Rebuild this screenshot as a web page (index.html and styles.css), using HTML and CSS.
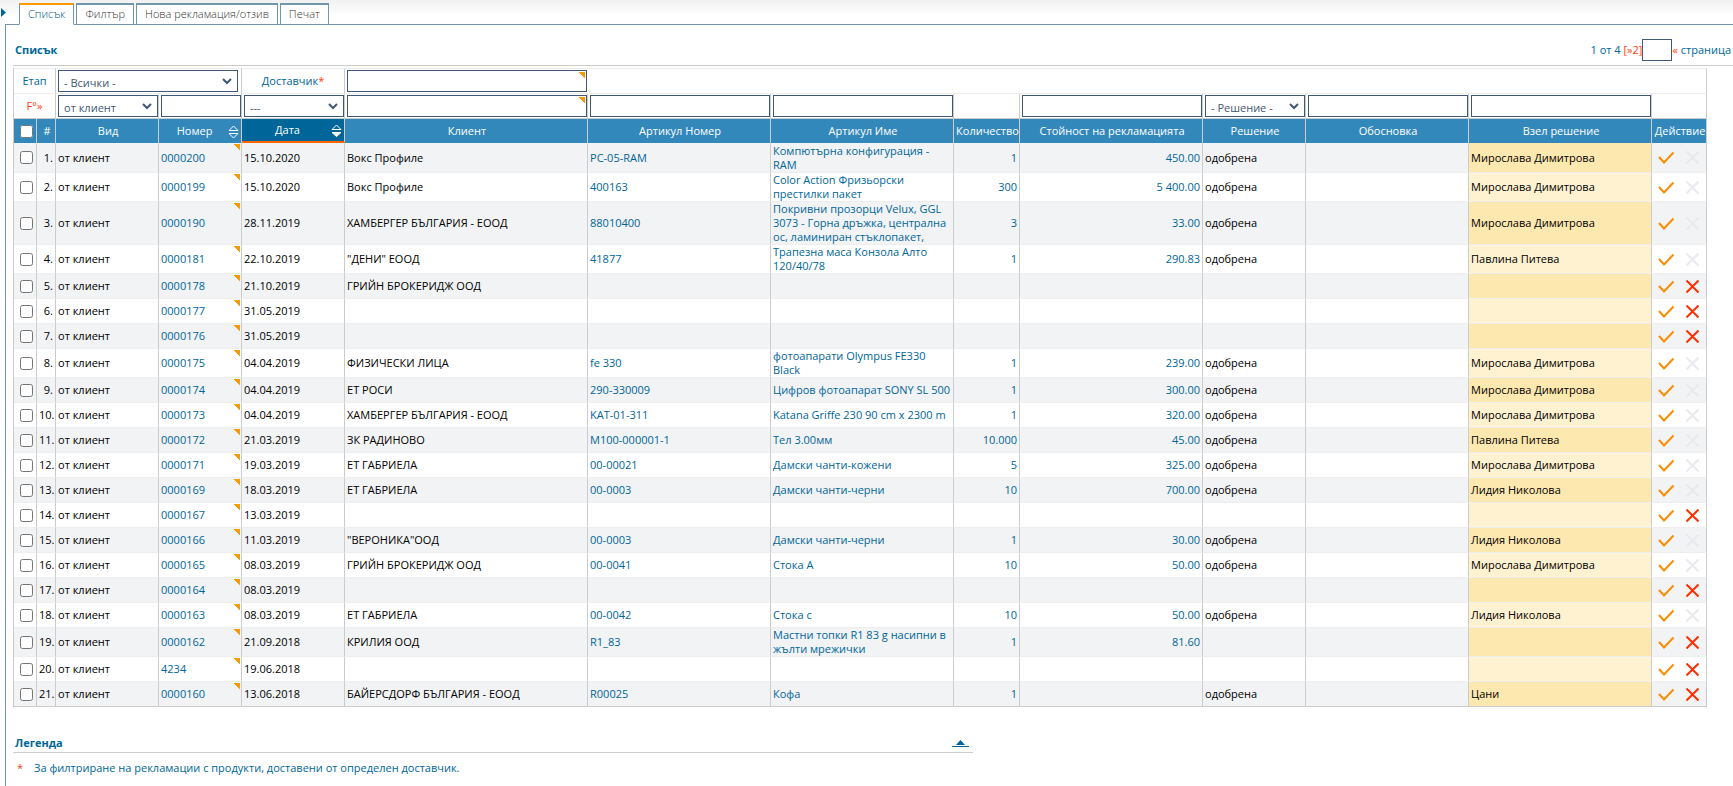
FILE: index.html
```html
<!DOCTYPE html>
<html lang="bg">
<head>
<meta charset="utf-8">
<title>Рекламации</title>
<link rel="stylesheet" href="styles.css">
</head>
<body>
<header class="top">
  <button class="side-toggle" type="button" aria-label="Меню"><svg width="6" height="9" viewBox="0 0 6 9"><path d="M1 0v9l5-4.500z" fill="#069"/></svg></button>
  <nav class="tabs">
    <a class="tab active" href="#">Списък</a>
    <a class="tab" href="#">Филтър</a>
    <a class="tab" href="#">Нова рекламация/отзив</a>
    <a class="tab" href="#">Печат</a>
  </nav>
</header>
<main class="panel">
  <div class="heading">
    <h1 class="title">Списък</h1>
    <div class="pager"><span>1 от 4&nbsp;</span><a class="hot" href="#">[»2]</a><input class="field page" type="text" aria-label="страница"><a class="hot" href="#">«</a><span>&nbsp;страница</span></div>
  </div>
  <div class="table-wrap">
  <table class="grid">
    <colgroup><col class="w-check"><col class="w-num"><col class="w-m"><col class="w-s"><col class="w-m"><col class="w-xl"><col class="w-l"><col class="w-l"><col class="w-qty"><col class="w-l"><col class="w-m"><col class="w-reason"><col class="w-l"><col class="w-act"></colgroup>
    <thead>
      <tr class="filters first">
        <td colspan="2" class="label"><label for="stage">Етап</label></td>
        <td colspan="2"><select id="stage" class="field pick stage"><option>- Всички -</option></select></td>
        <td class="label"><label for="supplier">Доставчик<span class="hot">*</span></label></td>
        <td colspan="9"><input id="supplier" class="field corner supplier" type="text"></td>
      </tr>
      <tr class="filters second">
        <td colspan="2" class="label"><a class="hot" href="#">F°»</a></td>
        <td><select class="field pick" aria-label="Вид"><option>от клиент</option></select></td>
        <td><input class="field" type="text" aria-label="Номер"></td>
        <td><select class="field pick" aria-label="Дата"><option>---</option></select></td>
        <td><input class="field corner" type="text" aria-label="Клиент"></td>
        <td><input class="field" type="text" aria-label="Артикул Номер"></td>
        <td><input class="field" type="text" aria-label="Артикул Име"></td>
        <td></td>
        <td><input class="field" type="text" aria-label="Стойност на рекламацията"></td>
        <td><select class="field pick" aria-label="Решение"><option>- Решение -</option></select></td>
        <td><input class="field" type="text" aria-label="Обосновка"></td>
        <td><input class="field" type="text" aria-label="Взел решение"></td>
        <td></td>
      </tr>
      <tr class="head">
        <th class="c"><input class="tick" type="checkbox" aria-label="Всички"></th>
        <th>#</th>
        <th>Вид</th>
        <th><div class="sortable"><span>Номер</span><svg width="11" height="13" viewBox="0 0 11 13" fill="none" stroke="#fff"><path d="M1 5.500h9L5.500 1zM1 8.500h9L5.500 13z"/></svg></div></th>
        <th class="sorted"><div class="sortable"><span>Дата</span><svg width="11" height="13" viewBox="0 0 11 13" fill="none" stroke="#fff"><path d="M1 5.500h9L5.500 1z"/><path d="M1 8.500h9L5.500 12.500z" fill="#fff"/></svg></div></th>
        <th>Клиент</th>
        <th>Артикул Номер</th>
        <th>Артикул Име</th>
        <th>Количество</th>
        <th>Стойност на рекламацията</th>
        <th>Решение</th>
        <th>Обосновка</th>
        <th>Взел решение</th>
        <th>Действие</th>
      </tr>
    </thead>
    <tbody id="rows"></tbody>
  </table>
  </div>
  <section class="legend">
    <div class="legend-head"><h2 class="title">Легенда</h2><button class="fold" type="button" aria-label="Свий"><svg width="17" height="7" viewBox="0 0 17 7"><path d="M4 5l4.500-5L13 5zM0 6h17v1H0z" fill="#069"/></svg></button></div>
    <p class="note"><span class="hot">*</span><span>За филтриране на рекламации с продукти, доставени от определен доставчик.</span></p>
  </section>
</main>
<script src="rows.js"></script>
</body>
</html>
```

FILE: styles.css
```css
* { box-sizing: border-box; }
body {
  margin: 0;
  font: 11px/14px "Open Sans", sans-serif;
  color: #069;
  background: #fff;
}
a { color: inherit; text-decoration: none; }
.hot, .hot:link { color: #ff3c0a; }
button { border: 0; padding: 0; background: none; display: block; }
svg { display: block; }

.top {
  display: flex;
  align-items: flex-start;
  height: 24px;
  padding-top: 3px;
  background: linear-gradient(#f1f1f1, #fff 16px);
}
.side-toggle { margin-top: 5px; width: 6px; }
.tabs { display: flex; gap: 2px; margin-left: 13px; }
.tab {
  height: 22px;
  padding: 2px 8px;
  border: 1px solid #7396a8;
  border-top-width: 2px;
  background: #fff;
  color: #333;
  font-weight: 300;
  position: relative;
}
.tab.active { border-top-color: #f90; border-bottom-color: #fff; color: #00578a; }

.panel {
  margin-left: 5px;
  border-left: 1px solid #7396a8;
  border-top: 1px solid #7396a8;
  padding: 14px 0 0 7px;
  min-height: calc(100vh - 24px);
}
.heading {
  display: flex;
  justify-content: space-between;
  align-items: flex-start;
  height: 27px;
  padding: 0 2px;
  border-bottom: 1px solid #ccc;
}
.title { margin: 0; font-size: 11px; line-height: 14px; font-weight: 700; }
.heading .title { margin-top: 4px; }
.pager { display: flex; line-height: 22px; }

.field {
  display: block;
  width: 100%;
  height: 22px;
  margin: 0;
  padding: 0 5px;
  border: 1px solid #3f5873;
  border-radius: 0;
  background: #fff;
  color: #3f5873;
  font: 11px/20px "Open Sans", sans-serif;
}
.page { width: 30px; }
.pick {
  appearance: none;
  padding-top: 2px;
  background: #fff url("data:image/svg+xml,%3Csvg xmlns='http://www.w3.org/2000/svg' width='10' height='7'%3E%3Cpath d='M1 1l4 4 4-4' fill='none' stroke='%233f5873' stroke-width='2'/%3E%3C/svg%3E") no-repeat right 5px center;
}
.corner, .flag {
  background: linear-gradient(45deg, transparent 44%, #f90 44%) no-repeat right 1px top 1px / 6px 6px;
}

.table-wrap { padding: 2px 26px 0 0; }
.grid {
  width: 100%;
  table-layout: fixed;
  border-collapse: separate;
  border-spacing: 0;
  border-left: 1px solid #ccc;
}
.w-check { width: 23px; }
.w-num { width: 19px; }
.w-s { width: 83px; }
.w-m { width: 103px; }
.w-l { width: 183px; }
.w-xl { width: 243px; }
.w-qty { width: 66px; }
.w-reason { width: 163px; }
.w-act { width: 55px; }

.grid td, .grid th {
  height: 25px;
  padding: 0 2px;
  border-right: 1px solid #ccc;
  border-bottom: 1px solid #eee;
  vertical-align: middle;
}
.grid .filters td { padding: 1px 0 1px 2px; }
.first td { border-top: 1px solid #eee; height: 26px; }
.grid .second td { border-bottom-color: #ccc; }
.grid .filters .label { text-align: center; padding: 0; }
.stage { width: 180px; }
.supplier { width: 240px; }

.grid th {
  height: 24px;
  padding: 0 0 0 2px;
  border-bottom: 0;
  background: #38b;
  color: #fff;
  font-weight: 500;
  white-space: nowrap;
}
.grid .sorted { background: #069; border-bottom: 2px solid #f60; }
.sortable { display: flex; align-items: center; padding-right: 2px; }
.sortable span { flex: 1; }

.tick { display: block; width: 13px; height: 13px; margin: 0 0 0 6px; }
.grid .c { padding: 0; }
.grid .r { text-align: right; }
.dark { color: #000; }
tbody tr:nth-child(odd) { background-color: #f2f3f5; }
tbody .who { background: #fff2d0; }
tbody tr:nth-child(odd) .who { background: #fde8b0; }
tbody tr:first-child td { height: 30px; }
tbody tr:last-child td { border-bottom-color: #ccc; }
.acts { display: flex; gap: 12px; padding-left: 4px; }

.legend { padding-top: 29px; width: 960px; max-width: 100%; }
.legend-head {
  display: flex;
  justify-content: space-between;
  align-items: center;
  height: 17px;
  padding: 0 4px 2px 2px;
  border-bottom: 1px solid #ccc;
}
.note { display: flex; gap: 11px; margin: 8px 0 0; padding-left: 4px; }
```

FILE: rows.js
```js
const M = 'Мирослава Димитрова', P = 'Павлина Питева', L = 'Лидия Николова', OK = 'одобрена';
// number, date, client, item code, item name, quantity, value, decision, decided by, deletable
const data = [
  ['0000200', '15.10.2020', 'Вокс Профиле', 'PC-05-RAM', 'Компютърна конфигурация - RAM', '1', '450.00', OK, M, 0],
  ['0000199', '15.10.2020', 'Вокс Профиле', '400163', 'Color Action Фризьорски престилки пакет', '300', '5 400.00', OK, M, 0],
  ['0000190', '28.11.2019', 'ХАМБЕРГЕР БЪЛГАРИЯ - ЕООД', '88010400', 'Покривни прозорци Velux, GGL 3073 - Горна дръжка, централна ос, ламиниран стъклопакет,', '3', '33.00', OK, M, 0],
  ['0000181', '22.10.2019', '"ДЕНИ" ЕООД', '41877', 'Трапезна маса Конзола Алто 120/40/78', '1', '290.83', OK, P, 0],
  ['0000178', '21.10.2019', 'ГРИЙН БРОКЕРИДЖ ООД', '', '', '', '', '', '', 1],
  ['0000177', '31.05.2019', '', '', '', '', '', '', '', 1],
  ['0000176', '31.05.2019', '', '', '', '', '', '', '', 1],
  ['0000175', '04.04.2019', 'ФИЗИЧЕСКИ ЛИЦА', 'fe 330', 'фотоапарати Olympus FE330 Black', '1', '239.00', OK, M, 0],
  ['0000174', '04.04.2019', 'ЕТ РОСИ', '290-330009', 'Цифров фотоапарат SONY SL 500', '1', '300.00', OK, M, 0],
  ['0000173', '04.04.2019', 'ХАМБЕРГЕР БЪЛГАРИЯ - ЕООД', 'KAT-01-311', 'Katana Griffe 230 90 cm x 2300 m', '1', '320.00', OK, M, 0],
  ['0000172', '21.03.2019', 'ЗК РАДИНОВО', 'M100-000001-1', 'Тел 3.00мм', '10.000', '45.00', OK, P, 0],
  ['0000171', '19.03.2019', 'ЕТ ГАБРИЕЛА', '00-00021', 'Дамски чанти-кожени', '5', '325.00', OK, M, 0],
  ['0000169', '18.03.2019', 'ЕТ ГАБРИЕЛА', '00-0003', 'Дамски чанти-черни', '10', '700.00', OK, L, 0],
  ['0000167', '13.03.2019', '', '', '', '', '', '', '', 1],
  ['0000166', '11.03.2019', '"ВЕРОНИКА"ООД', '00-0003', 'Дамски чанти-черни', '1', '30.00', OK, L, 0],
  ['0000165', '08.03.2019', 'ГРИЙН БРОКЕРИДЖ ООД', '00-0041', 'Стока А', '10', '50.00', OK, M, 0],
  ['0000164', '08.03.2019', '', '', '', '', '', '', '', 1],
  ['0000163', '08.03.2019', 'ЕТ ГАБРИЕЛА', '00-0042', 'Стока с', '10', '50.00', OK, L, 0],
  ['0000162', '21.09.2018', 'КРИЛИЯ ООД', 'R1_83', 'Мастни топки R1 83 g насипни в жълти мрежички', '1', '81.60', '', '', 1],
  ['4234', '19.06.2018', '', '', '', '', '', '', '', 1],
  ['0000160', '13.06.2018', 'БАЙЕРСДОРФ БЪЛГАРИЯ - ЕООД', 'R00025', 'Кофа', '1', '', OK, 'Цани', 1]
];
const check = '<svg width="16" height="13" viewBox="0 0 16 13"><path d="M1 6l5 5.500L15.500 1.500" fill="none" stroke="#ff8c00" stroke-width="2"/></svg>';
const cross = on => `<svg width="13" height="13" viewBox="0 0 13 13"><path d="M.5.5l12 12M12.500.5l-12 12" fill="none" stroke="${on ? '#ff3000' : '#e9eaed'}" stroke-width="2"/></svg>`;
document.getElementById('rows').innerHTML = data.map((d, i) => `<tr>
<td class="c"><input class="tick" type="checkbox" aria-label="${d[0]}"></td>
<td class="r dark">${i + 1}.</td><td class="dark">от клиент</td>
<td class="flag"><a href="#">${d[0]}</a></td><td class="dark">${d[1]}</td><td class="dark">${d[2]}</td>
<td>${d[3]}</td><td>${d[4]}</td><td class="r">${d[5]}</td><td class="r">${d[6]}</td>
<td class="dark">${d[7]}</td><td></td><td class="dark who">${d[8]}</td>
<td><div class="acts"><button type="button" aria-label="Приеми">${check}</button><button type="button" aria-label="Изтрий"${d[9] ? '' : ' disabled'}>${cross(d[9])}</button></div></td></tr>`).join('');
```
